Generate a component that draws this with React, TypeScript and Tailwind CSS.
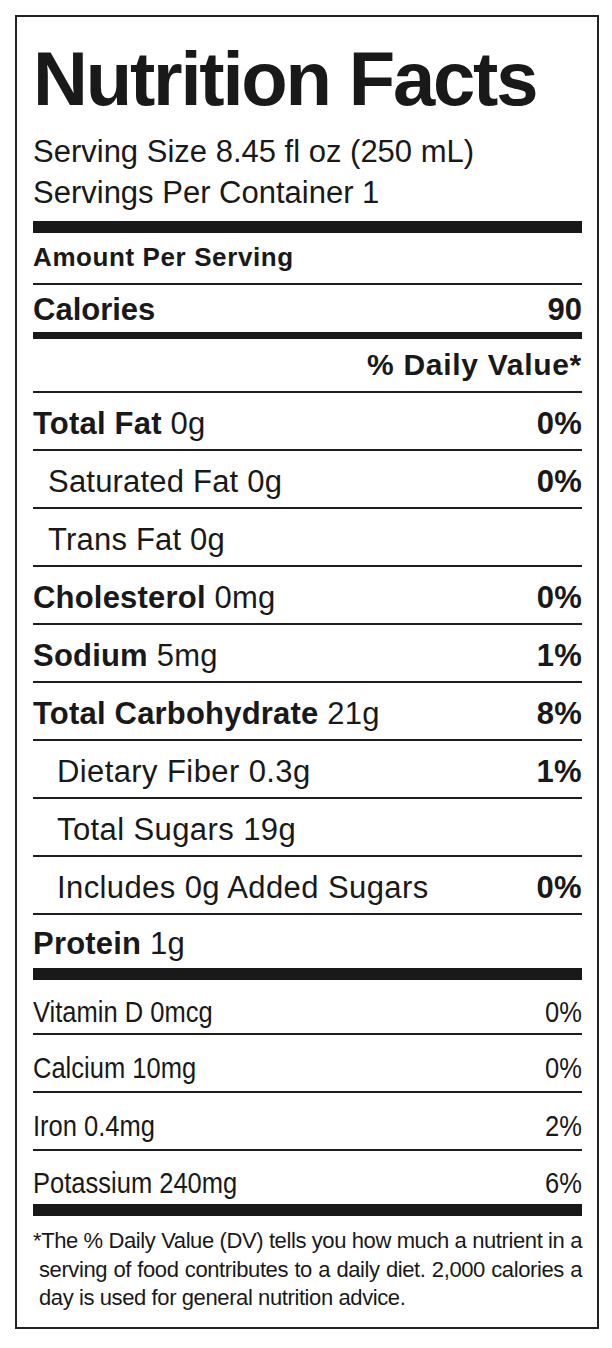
const sans = "font-['Liberation_Sans',Arial,sans-serif]";

type Nutrient = {
  label: string;
  amount?: string;
  dv?: string;
  bold?: boolean;
  indent?: "none" | "sm" | "md";
};

const nutrients: Nutrient[] = [
  { label: "Total Fat", amount: "0g", dv: "0%", bold: true },
  { label: "Saturated Fat 0g", dv: "0%", indent: "sm" },
  { label: "Trans Fat 0g", indent: "sm" },
  { label: "Cholesterol", amount: "0mg", dv: "0%", bold: true },
  { label: "Sodium", amount: "5mg", dv: "1%", bold: true },
  { label: "Total Carbohydrate", amount: "21g", dv: "8%", bold: true },
  { label: "Dietary Fiber 0.3g", dv: "1%", indent: "md" },
  { label: "Total Sugars 19g", indent: "md" },
  { label: "Includes 0g Added Sugars", dv: "0%", indent: "md" },
];

const vitamins = [
  { label: "Vitamin D 0mcg", dv: "0%", h: "h-[53px]" },
  { label: "Calcium 10mg", dv: "0%", h: "h-[56px]" },
  { label: "Iron 0.4mg", dv: "2%", h: "h-[56px]" },
  { label: "Potassium 240mg", dv: "6%", h: "h-[53px]" },
];

const thin = "h-[2px] bg-[#1e1e1e]";
const thick = "bg-[#191919]";

function NutrientRow({ n }: { n: Nutrient }) {
  const pad = n.indent === "md" ? "pl-[24px]" : n.indent === "sm" ? "pl-[15px]" : "";
  const track = n.indent === "md" ? "tracking-[0.4px]" : "tracking-[0.2px]";
  return (
    <>
      <div className={`flex h-[56px] items-center justify-between pt-[6px] text-[31px] ${track} ${pad}`}>
        <span>
          {n.bold ? (
            <>
              <span className="font-bold">{n.label}</span> {n.amount}
            </>
          ) : (
            n.label
          )}
        </span>
        {n.dv && <span className="font-bold">{n.dv}</span>}
      </div>
      <div className={thin} />
    </>
  );
}

export default function App() {
  return (
    <div className={`min-h-screen bg-white pl-[15px] pt-[15px] text-[#191919] ${sans}`}>
      <div className="h-[1314px] w-[584px] border-2 border-[#222] pl-[16px] pr-[15px]">
        <h1 className="mt-[24px] text-[76px] font-bold leading-[76px] tracking-[-2.2px]">
          Nutrition Facts
        </h1>
        <div className="mt-[14px] text-[31px] leading-[41px]">
          <div>Serving Size 8.45 fl oz (250 mL)</div>
          <div>Servings Per Container 1</div>
        </div>
        <div className={`mt-[8px] h-[12px] ${thick}`} />

        <div className="flex h-[50px] items-center pb-[2px] text-[26px] font-bold tracking-[0.6px]">
          Amount Per Serving
        </div>
        <div className={thin} />
        <div className="flex h-[47px] items-center justify-between pt-[4px] text-[31px] font-bold">
          <span>Calories</span>
          <span>90</span>
        </div>
        <div className={`h-[7px] ${thick}`} />
        <div className="flex h-[52px] items-center justify-end pb-[2px] text-[30px] font-bold tracking-[0.7px]">
          % Daily Value*
        </div>
        <div className={thin} />

        {nutrients.map((n) => (
          <NutrientRow key={n.label} n={n} />
        ))}

        <div className="flex h-[53px] items-center pt-[6px] text-[31px] tracking-[0.2px]">
          <span>
            <span className="font-bold">Protein</span> 1g
          </span>
        </div>
        <div className={`h-[12px] ${thick}`} />

        {vitamins.map((v, i) => (
          <div key={v.label}>
            <div className={`flex items-center justify-between pt-[12px] text-[29px] ${v.h}`}>
              <span className="inline-block origin-left scale-x-[0.88] whitespace-nowrap">{v.label}</span>
              <span className="inline-block origin-right scale-x-[0.88]">{v.dv}</span>
            </div>
            {i < vitamins.length - 1 && <div className={thin} />}
          </div>
        ))}
        <div className={`h-[12px] ${thick}`} />

        <div className="pt-[11px] text-[22px] leading-[28.5px] tracking-[-0.4px]">
          <div className="text-justify [text-align-last:justify]">
            *The % Daily Value (DV) tells you how much a nutrient in a
          </div>
          <div className="pl-[6px] text-justify [text-align-last:justify]">
            serving of food contributes to a daily diet. 2,000 calories a
          </div>
          <div className="pl-[6px]">day is used for general nutrition advice.</div>
        </div>
      </div>
    </div>
  );
}
